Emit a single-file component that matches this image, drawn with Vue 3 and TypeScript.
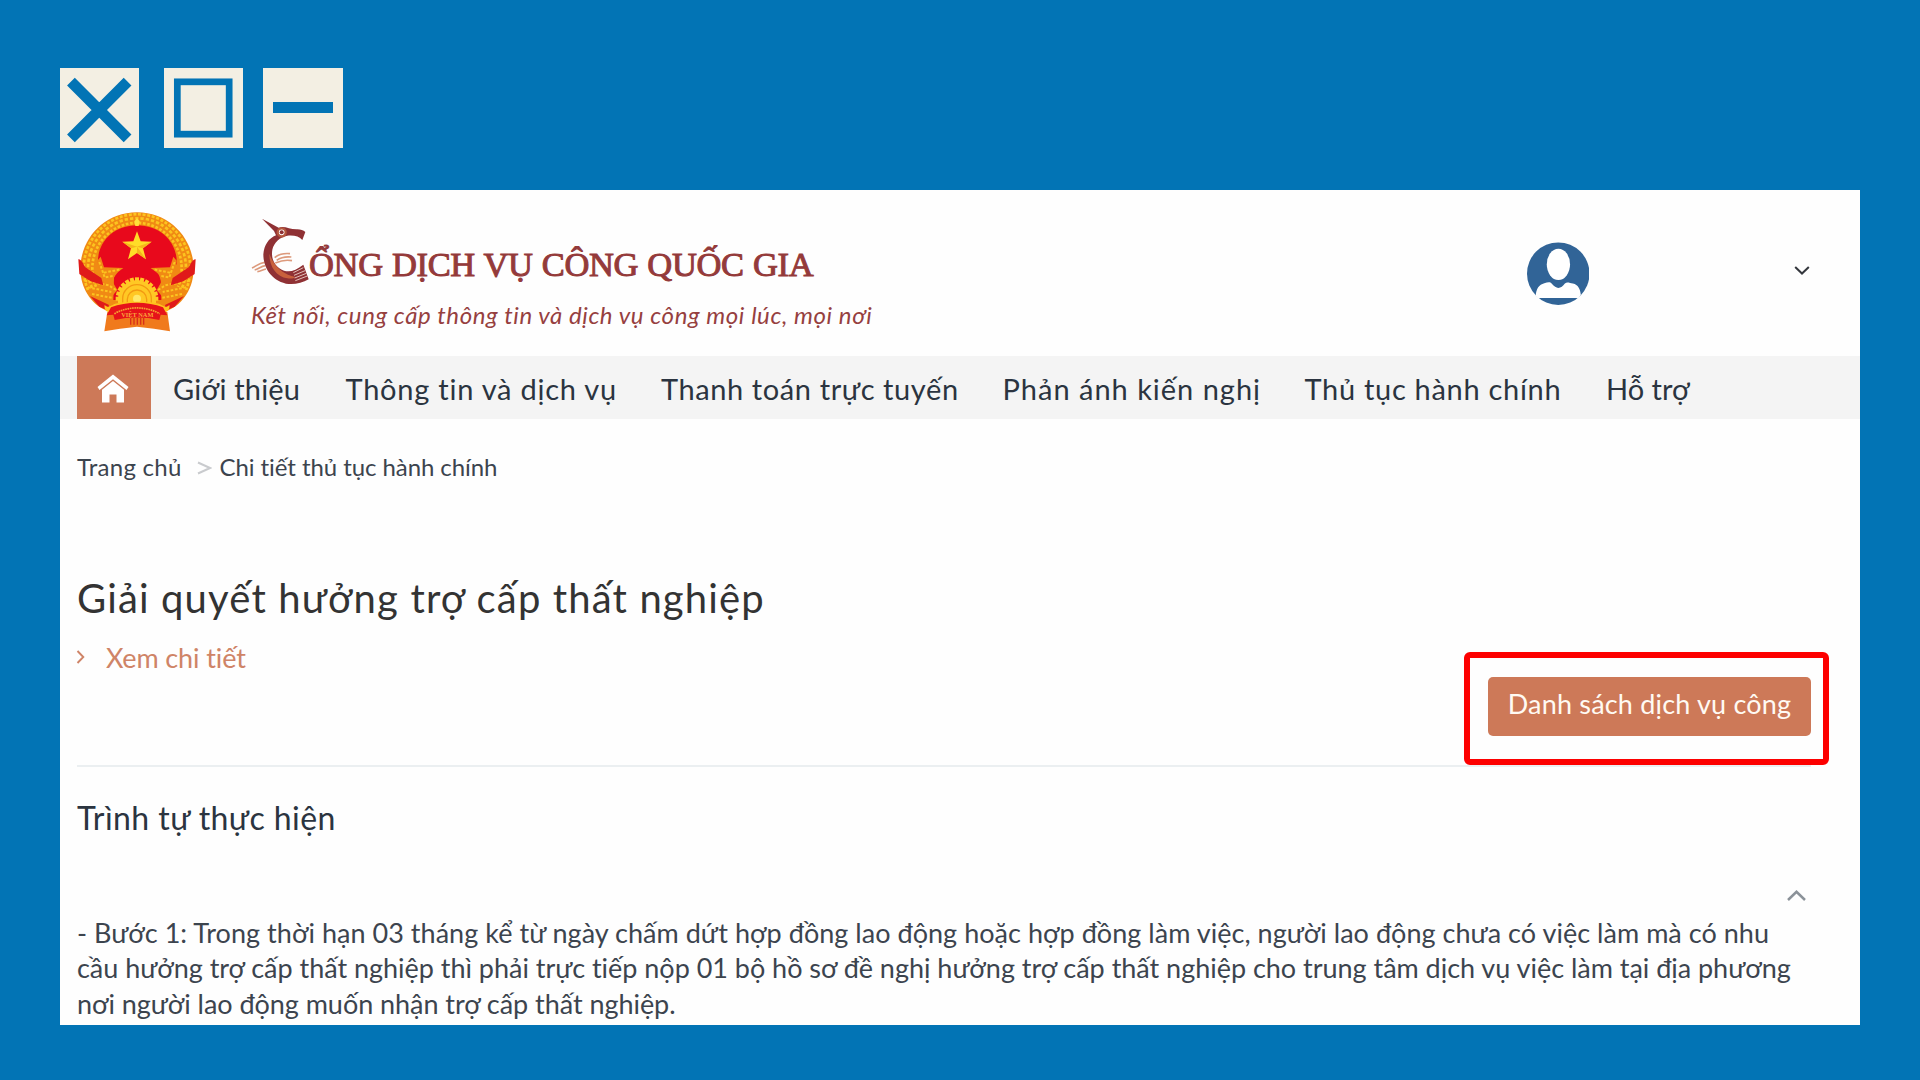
<script setup lang="ts">
interface NavItem {
  label: string
  width: number
  spacing: number
}

const navItems: NavItem[] = [
  { label: 'Giới thiệu', width: 172.5, spacing: 0.2 },
  { label: 'Thông tin và dịch vụ', width: 315.5, spacing: 0.77 },
  { label: 'Thanh toán trực tuyến', width: 341.5, spacing: 0.6 },
  { label: 'Phản ánh kiến nghị', width: 302, spacing: 0.99 },
  { label: 'Thủ tục hành chính', width: 301.5, spacing: 0.7 },
  { label: 'Hỗ trợ', width: 100, spacing: 0 },
]

const stepLines: string[] = [
  '- Bước 1: Trong thời hạn 03 tháng kể từ ngày chấm dứt hợp đồng lao động hoặc hợp đồng làm việc, người lao động chưa có việc làm mà có nhu',
  'cầu hưởng trợ cấp thất nghiệp thì phải trực tiếp nộp 01 bộ hồ sơ đề nghị hưởng trợ cấp thất nghiệp cho trung tâm dịch vụ việc làm tại địa phương',
  'nơi người lao động muốn nhận trợ cấp thất nghiệp.',
]

const gearTeeth: number[] = Array.from({ length: 13 }, (_, i) => -90 + i * 15)
</script>

<template>
  <div class="page">
    <div class="window-buttons">
      <svg class="wb" viewBox="0 0 80 80">
        <path d="M11 13.500 L68 70.500 M68 13.500 L11 70.500" stroke="#0274b5" stroke-width="11" />
      </svg>
      <svg class="wb wb-max" viewBox="0 0 80 80">
        <rect x="13.500" y="13.500" width="52.500" height="53" fill="none" stroke="#0274b5" stroke-width="6.800" />
      </svg>
      <svg class="wb wb-min" viewBox="0 0 80 80">
        <rect x="10" y="34" width="60" height="11" fill="#0274b5" />
      </svg>
    </div>

    <main class="panel">
      <header class="header">
        <svg class="emblem" viewBox="0 0 480 480">
          <path d="M142 366 L133 424 L180 416 L231 410 L282 416 L330 424 L322 366 Z" fill="#f07a1c" />
          <path d="M231 67 C330 67 398 145 401 232 C402 290 372 342 322 362 L140 362 C90 342 60 290 61 232 C64 145 132 67 231 67 Z" fill="#f08a14" />
          <g fill="none" stroke="#fcc41f">
            <path d="M84 300 A160 163 0 1 1 378 300" stroke-width="8" stroke-dasharray="9 5" />
            <path d="M96 294 A147 150 0 1 1 366 294" stroke-width="8" stroke-dasharray="10 6" />
            <path d="M108 290 A134 137 0 1 1 354 290" stroke-width="8" stroke-dasharray="8 5" />
          </g>
          <path d="M231 106 C306 106 354 162 350 222 L336 240 L284 238 L302 262 L304 330 L160 330 L162 262 L180 238 L128 240 L114 222 C110 162 156 106 231 106 Z" fill="#e8091c" />
          <path d="M231 84 l8 10 l-3 14 h-10 l-3 -14 Z" fill="#ffe03a" />
          <path d="M231 124 L242 154 L275 155 L249 175 L258 208 L231 189 L204 208 L213 175 L187 155 L220 154 Z" fill="#ffdc28" />
          <path d="M231 124 L231 170 L258 208 L231 189 Z M275 155 L231 170 L249 175 Z M213 175 L231 170 L187 155 Z" fill="#f5b51b" />
          <g fill="#f08a14">
            <path d="M112 212 L122 200 L132 232 L190 234 L166 252 L158 276 L172 300 L150 326 L124 300 Z" />
            <path d="M350 212 L340 200 L330 232 L272 234 L296 252 L304 276 L290 300 L312 326 L338 300 Z" />
          </g>
          <g fill="none" stroke="#fcc41f" stroke-width="6" stroke-dasharray="8 5">
            <path d="M74 272 L146 286 L168 300 M84 292 L154 306 M96 312 L158 324 M118 216 L134 262 L158 258 M132 248 L182 238" />
            <path d="M388 272 L316 286 L294 300 M378 292 L308 306 M366 312 L304 324 M344 216 L328 262 L304 258 M330 248 L280 238" />
          </g>
          <g fill="#e01a1a">
            <path d="M55 208 C62 206 68 218 76 232 L124 264 L130 286 L92 274 L58 252 Z" />
            <path d="M407 208 C400 206 394 218 386 232 L338 264 L332 286 L370 274 L404 252 Z" />
            <path d="M90 318 L118 350 L150 364 L146 344 Z" />
            <path d="M372 318 L344 350 L312 364 L316 344 Z" />
          </g>
          <g fill="#ffc824">
            <rect v-for="a in gearTeeth" :key="a" x="225" y="262" width="12" height="16" :transform="`rotate(${a} 231 326)`" />
            <path d="M174 340 V326 A57 55 0 0 1 288 326 V340 Z" />
          </g>
          <g fill="none" stroke="#f39a12" stroke-width="4">
            <path d="M188 340 V326 A43 42 0 0 1 274 326 V340" />
            <path d="M202 340 V328 A29 28 0 0 1 260 328 V340" />
          </g>
          <circle cx="231" cy="326" r="12" fill="#ffe86a" />
          <path d="M134 344 C146 360 158 340 174 340 C200 334 262 334 288 340 C304 340 316 360 328 344 C332 366 310 372 300 362 L162 362 C152 372 130 366 134 344 Z" fill="#ffc21e" />
          <path d="M153 352 C200 334 262 334 309 352 L322 376 L302 374 L298 390 C255 380 207 380 164 390 L160 374 L140 376 Z" fill="#e6131a" />
          <path d="M163 371 C205 348 257 348 299 371" fill="none" stroke="#f7a030" stroke-width="5" stroke-dasharray="5 2" />
          <text x="232" y="380" class="emblem-text">VIỆT NAM</text>
          <path d="M212 384 V404 M222 383 V404 M232 383 V404 M242 383 V404 M251 384 V404" stroke="#d9301a" stroke-width="4" />
        </svg>

        <div class="brand">
          <div class="brand-row">
            <svg class="bird" viewBox="60 50 180 210">
              <g fill="none" stroke="#dd9a7c" stroke-width="5">
                <path d="M66 203 C78 198 86 188 104 186 M74 209 C86 206 92 198 106 196 M82 214 C92 213 98 208 108 206" />
                <path d="M134 172 C148 160 160 158 180 160 M140 180 C154 170 164 168 184 170 M136 188 C154 180 170 178 186 181" />
              </g>
              <path d="M96 55 L146 82 C164 76 180 88 202 87 C212 88 220 90 226 95 L217 119 C208 108 192 104 172 106 C150 110 132 126 127 148 C122 178 136 202 162 211 C180 217 198 210 220 193 L236 237 C216 249 190 254 168 250 C124 240 100 202 100 162 C102 134 116 114 138 105 L132 92 Z" fill="#8f3134" />
              <path d="M118 160 C118 200 140 230 172 234 C184 236 192 234 196 230 C178 226 138 214 118 160 Z" fill="#c9613c" />
              <circle cx="155" cy="96" r="12" fill="#fff" stroke="#b4573d" stroke-width="7" />
              <circle cx="155" cy="96" r="6" fill="#8f3134" />
              <path d="M190 217 L220 202 M192 225 L225 211 M194 233 L229 219 M196 241 L232 227" stroke="#f3ddd5" stroke-width="2.500" />
            </svg>
            <h1 class="brand-title">ỔNG DỊCH VỤ CÔNG QUỐC GIA</h1>
          </div>
          <p class="slogan">Kết nối, cung cấp thông tin và dịch vụ công mọi lúc, mọi nơi</p>
        </div>

        <div class="account">
          <svg class="avatar" viewBox="80 65 188 190">
            <circle cx="174" cy="160" r="94" fill="#316497" />
            <ellipse cx="174.500" cy="132" rx="35" ry="47" fill="#fff" />
            <path d="M106 227 C108 204 116 194 132 189 C142 186 150 184 154 190 C162 199 168 203 174 203 C182 203 188 198 194 190 C200 184 208 188 218 190 C234 194 240 206 242 224 L235 233 H114 Z" fill="#fff" />
          </svg>
          <svg class="chev-down" viewBox="0 0 16 10">
            <path d="M1.200 1 L8 7.500 L14.800 1" fill="none" stroke="#34373d" stroke-width="2" />
          </svg>
        </div>
      </header>

      <nav class="nav">
        <a class="home">
          <svg class="home-icon" viewBox="0 0 32 30">
            <path d="M16 0.500 L31.500 13 L29.500 16 L16 5.300 L2.500 16 L0.500 13 Z" fill="#fff" />
            <path d="M16 7 L27 15.800 V28.500 H19.500 V20.500 H12.500 V28.500 H5 V15.800 Z" fill="#fff" />
          </svg>
        </a>
        <a
          v-for="item in navItems"
          :key="item.label"
          class="nav-item"
          :style="{ width: item.width + 'px', letterSpacing: item.spacing + 'px' }"
        >{{ item.label }}</a>
      </nav>

      <section class="content">
        <div class="crumbs">
          <span class="crumb-home">Trang chủ</span>
          <svg class="crumb-sep" viewBox="0 0 15 14">
            <path d="M1 1.500 L13 7 L1 12.500" fill="none" stroke="#c9cbce" stroke-width="2" />
          </svg>
          <span>Chi tiết thủ tục hành chính</span>
        </div>

        <h2 class="title">Giải quyết hưởng trợ cấp thất nghiệp</h2>

        <a class="details">
          <svg class="chev-right" viewBox="0 0 9 14">
            <path d="M1.500 1 L7.300 7 L1.500 13" fill="none" stroke="#cf8467" stroke-width="1.900" />
          </svg>
          <span>Xem chi tiết</span>
        </a>

        <div class="action-row">
          <div class="action">
            <button class="service-btn">Danh sách dịch vụ công</button>
            <div class="highlight"></div>
          </div>
        </div>

        <div class="divider"></div>

        <h3 class="subtitle">Trình tự thực hiện</h3>

        <div class="toggle-row">
          <svg class="chev-up" viewBox="0 0 19 11">
            <path d="M1 10 L9.500 1.800 L18 10" fill="none" stroke="#8b9299" stroke-width="2.500" />
          </svg>
        </div>

        <p class="steps">
          <span v-for="line in stepLines" :key="line" class="step-line">{{ line }}</span>
        </p>
      </section>
    </main>
  </div>
</template>

<style>
body {
  margin: 0;
  background: #0274b5;
}
</style>

<style scoped>
.page {
  box-sizing: border-box;
  width: 1920px;
  height: 1080px;
  padding: 68px 60px 0 59.5px;
  overflow: hidden;
  background: #0274b5;
  font-family: Lato, "Noto Sans", sans-serif;
}

h1,
h2,
h3,
p {
  margin: 0;
  font-weight: 400;
}

.window-buttons {
  display: flex;
  height: 80px;
}

.wb {
  width: 79.5px;
  height: 80px;
  background: #f3efe3;
}

.wb-max {
  width: 79px;
  margin-left: 25px;
}

.wb-min {
  width: 80px;
  margin-left: 20px;
}

.panel {
  height: 835px;
  margin-top: 42px;
  overflow: hidden;
  background: #fefefe;
}

.header {
  display: flex;
  height: 166px;
}

.emblem {
  width: 160px;
  height: 160px;
  margin-left: 0.5px;
}

.emblem-text {
  font: 700 19px "Liberation Serif", serif;
  fill: #f9a83a;
  text-anchor: middle;
}

.brand {
  padding: 26.7px 0 0 30px;
}

.brand-row {
  display: flex;
  height: 70px;
}

.bird {
  width: 60px;
  height: 70px;
}

.brand-title {
  margin: 24px 0 0 -1px;
  color: #943a3a;
  font-family: "Liberation Serif", serif;
  font-size: 34.5px;
  line-height: 46px;
  letter-spacing: -0.34px;
  word-spacing: 0.9px;
  white-space: nowrap;
  -webkit-text-stroke: 1px #943a3a;
}

.slogan {
  margin: 13px 0 0 1px;
  color: #96403f;
  font-size: 24px;
  font-style: italic;
  line-height: 30px;
  letter-spacing: 0.58px;
  white-space: nowrap;
}

.account {
  display: flex;
  margin-left: auto;
  padding: 51.7px 50px 0 0;
}

.avatar {
  width: 62.5px;
  height: 63.3px;
}

.chev-down {
  width: 16px;
  height: 10px;
  margin: 24px 0 0 205px;
}

.nav {
  display: flex;
  height: 63px;
  padding-left: 17.5px;
  background: #f4f4f4;
}

.home {
  display: flex;
  justify-content: center;
  width: 74px;
  margin-right: 22px;
  background: #cd7958;
}

.home-icon {
  width: 32px;
  height: 30px;
  margin-top: 17.5px;
  margin-left: -2px;
}

.nav-item {
  flex: none;
  color: #2b3440;
  font-size: 29px;
  line-height: 66px;
  white-space: nowrap;
}

.content {
  padding: 32px 49px 0 17.5px;
}

.crumbs {
  display: flex;
  height: 30px;
  color: #3c444e;
  font-size: 24px;
  line-height: 31px;
  letter-spacing: -0.07px;
}

.crumb-home {
  width: 119.5px;
  letter-spacing: 0.26px;
}

.crumb-sep {
  width: 15px;
  height: 14px;
  margin: 10px 8px 0 0;
}

.title {
  margin-top: 92px;
  color: #333;
  font-size: 40px;
  line-height: 50px;
  letter-spacing: 1.14px;
}

.details {
  display: flex;
  height: 34px;
  margin-top: 18px;
  color: #cf8467;
  font-size: 27px;
  line-height: 34px;
  letter-spacing: -0.12px;
}

.chev-right {
  width: 9px;
  height: 14px;
  margin: 9px 21px 0 -1px;
}

.action-row {
  display: flex;
  justify-content: flex-end;
  margin-top: 1.5px;
}

.action {
  position: relative;
}

.service-btn {
  display: block;
  width: 323px;
  height: 59.5px;
  padding: 0 0 5.5px;
  border: 0;
  border-radius: 5px;
  background: #cd7958;
  color: #fffaf3;
  font-family: inherit;
  font-size: 27px;
  line-height: 54px;
  letter-spacing: 0.19px;
}

.highlight {
  position: absolute;
  top: -25px;
  left: -24px;
  box-sizing: border-box;
  width: 365px;
  height: 113px;
  border: 6px solid #fd0000;
  border-radius: 6px;
}

.divider {
  height: 2px;
  margin-top: 29px;
  background: #ebeff1;
}

.subtitle {
  margin-top: 31px;
  color: #2b3440;
  font-size: 32px;
  line-height: 40px;
  letter-spacing: 0.45px;
}

.toggle-row {
  display: flex;
  justify-content: flex-end;
  height: 11px;
  margin-top: 51.5px;
  padding-right: 5.5px;
}

.chev-up {
  width: 19px;
  height: 11px;
}

.steps {
  margin-top: 14px;
  color: #3c444e;
  font-size: 27px;
  line-height: 35.8px;
}

.step-line {
  display: block;
  letter-spacing: 0.035px;
  white-space: nowrap;
}

.step-line:nth-child(2) {
  letter-spacing: -0.02px;
}

.step-line:nth-child(3) {
  letter-spacing: -0.04px;
}
</style>
